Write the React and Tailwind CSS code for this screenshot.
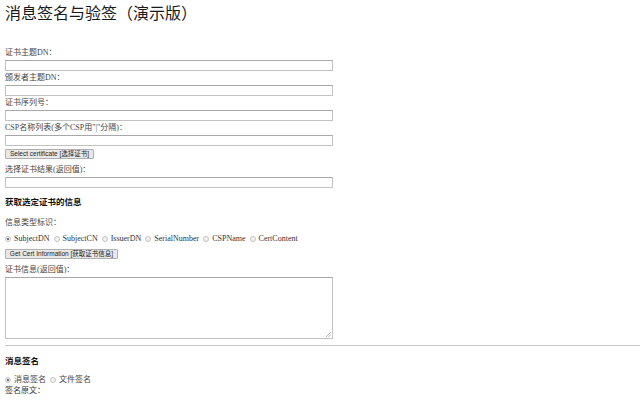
import React from "react";

const serif = { fontFamily: '"Liberation Serif", "Noto Sans CJK SC", serif' };

function Label({ children, cls = "" }) {
  return (
    <div className={`h-[14px] leading-[14px] text-[8px] text-[#444] whitespace-nowrap ${cls}`}>
      {children}
    </div>
  );
}

function Input() {
  return <div className="h-[11px] w-[328px] border border-[#c2c2c2] border-t-[#a8a8a8] bg-white" />;
}

function Button({ children, w, cls = "" }) {
  return (
    <div
      className={`h-[10px] ${w} flex items-center justify-center border border-[#b0b0b0] bg-[#e8e8e8] rounded-[1px] text-[6.5px] leading-[8px] text-[#222] whitespace-nowrap ${cls}`}
      style={{ fontFamily: '"Liberation Sans", "Noto Sans CJK SC", sans-serif' }}
    >
      {children}
    </div>
  );
}

function Radio({ checked, label }) {
  return (
    <span className="inline-flex items-center gap-[3px] mr-[4px]">
      <span className="w-[6px] h-[6px] rounded-full border border-[#c4c4c4] bg-[#f2f2f2] flex items-center justify-center">
        {checked && <span className="w-[2px] h-[2px] rounded-full bg-[#444]" />}
      </span>
      <span>{label}</span>
    </span>
  );
}

export default function App() {
  return (
    <div className="w-[640px] h-[400px] overflow-hidden bg-white text-black" style={serif}>
      <div className="pl-[5px] flex flex-col items-start">
        <div className="mt-[4px] h-[20px] leading-[20px] text-[16px] font-normal text-[#1a1a1a] whitespace-nowrap">
          消息签名与验签（演示版）
        </div>
        <Label cls="mt-[22px]">证书主题DN：</Label>
        <Input />
        <Label>颁发者主题DN：</Label>
        <Input />
        <Label>证书序列号：</Label>
        <Input />
        <Label>CSP名称列表(多个CSP用"|"分隔)：</Label>
        <Input />
        <Button w="w-[89px]" cls="mt-[3px]">Select certificate [选择证书]</Button>
        <Label cls="mt-[4px]">选择证书结果(返回值)：</Label>
        <Input />
        <div className="mt-[7px] h-[14px] leading-[14px] text-[8.5px] font-bold text-[#111] whitespace-nowrap">获取选定证书的信息</div>
        <Label cls="mt-[7px]">信息类型标识：</Label>
        <div className="mt-[2px] h-[14px] leading-[14px] text-[8px] text-[#333] flex items-center whitespace-nowrap">
          <Radio checked label="SubjectDN" />
          <Radio label="SubjectCN" />
          <Radio label="IssuerDN" />
          <Radio label="SerialNumber" />
          <Radio label="CSPName" />
          <Radio label="CertContent" />
        </div>
        <Button w="w-[113px]" cls="mt-[3px]">Get Cert Information [获取证书信息]</Button>
        <Label cls="mt-[4px]">证书信息(返回值)：</Label>
        <div className="relative h-[62px] w-[328px] border border-[#c2c2c2] border-t-[#a8a8a8] bg-white">
          <svg className="absolute right-[1px] bottom-[1px]" width="5" height="5" viewBox="0 0 5 5">
            <path d="M5 0 L0 5 M5 2.5 L2.5 5" stroke="#999" strokeWidth="0.7" />
          </svg>
        </div>
        <div className="mt-[6px] h-0 w-[635px] border-t border-[#c8c8c8]" />
        <div className="mt-[8px] h-[14px] leading-[14px] text-[8.5px] font-bold text-[#111] whitespace-nowrap">消息签名</div>
        <div className="mt-[6px] h-[11px] leading-[11px] text-[8px] text-[#444] flex items-center whitespace-nowrap">
          <Radio checked label="消息签名" />
          <Radio label="文件签名" />
        </div>
        <div className="h-[11px] leading-[11px] text-[8px] text-[#333] whitespace-nowrap">签名原文：</div>
      </div>
    </div>
  );
}
